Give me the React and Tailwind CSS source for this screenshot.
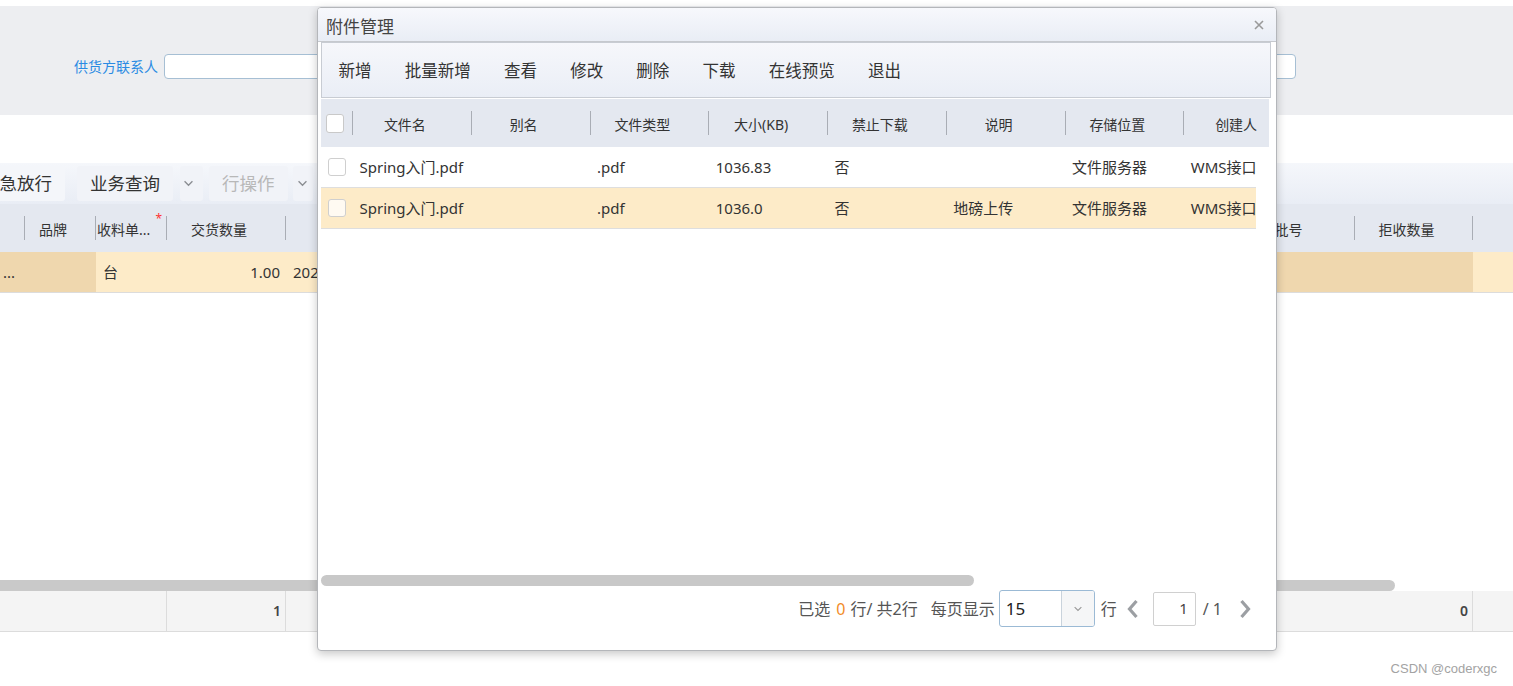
import React from 'react';

// Tiny drawn glyphs used by the toolbars and the pager
const ChevronDown = ({ className }) => (
    <svg viewBox="0 0 12 8" className={className} fill="none" stroke="currentColor" strokeWidth="1.5">
        <polyline points="1.5,1.5 6,6 10.5,1.5" />
    </svg>
);

const ChevronSide = ({ dir, className }) => (
    <svg viewBox="0 0 14 20" className={className} fill="none" stroke="currentColor" strokeWidth="3.2" strokeLinejoin="miter">
        {dir === 'left' ? <polyline points="11,2 4,10 11,18" /> : <polyline points="3,2 10,10 3,18" />}
    </svg>
);

const CloseIcon = () => (
    <svg viewBox="0 0 10 10" className="w-[10px] h-[10px] text-[#9a9a9a]" fill="none" stroke="currentColor" strokeWidth="1.6">
        <path d="M1 1 L9 9 M9 1 L1 9" />
    </svg>
);

const Divider = () => <div className="w-px h-[24px] bg-[#a9adb5] shrink-0" />;

// background grid columns (page behind the dialog, scrolled horizontally)
const bgCols = [
    { w: 'w-[25px]', head: '', foot: '' },
    { w: 'w-[71px]', head: '品牌', foot: '' },
    { w: 'w-[71px]', head: '收料单...', cell: '台', req: true, foot: '' },
    { w: 'w-[119px]', head: '交货数量', cell: '1.00', right: true, foot: '1' },
    { w: 'w-[951px]', head: '', cell: '2022-01-01', foot: '' },
    { w: 'w-[118px]', head: '批号', cell: '', dark: true, foot: '' },
    { w: 'w-[118px]', head: '拒收数量', cell: '', dark: true, foot: '0' },
];

const dialogCols = [
    { title: '文件名', key: 'name' },
    { title: '别名', key: 'alias' },
    { title: '文件类型', key: 'type' },
    { title: '大小(KB)', key: 'size' },
    { title: '禁止下载', key: 'noDl' },
    { title: '说明', key: 'desc' },
    { title: '存储位置', key: 'store' },
    { title: '创建人', key: 'creator' },
];

const files = [
    { id: 1, name: 'Spring入门.pdf', alias: '', type: '.pdf', size: '1036.83', noDl: '否', desc: '', store: '文件服务器', creator: 'WMS接口', selected: false },
    { id: 2, name: 'Spring入门.pdf', alias: '', type: '.pdf', size: '1036.0', noDl: '否', desc: '地磅上传', store: '文件服务器', creator: 'WMS接口', selected: true },
];

const toolButtons = ['新增', '批量新增', '查看', '修改', '删除', '下载', '在线预览', '退出'];

const AttachmentDialog = () => (
    <div className="absolute left-[317px] top-[7px] w-[960px] h-[644px] bg-white border border-[#b4b6ba] rounded-[4px] shadow-[0_3px_10px_rgba(0,0,0,0.22)] flex flex-col overflow-hidden">
        {/* Title bar */}
        <div className="h-[34px] shrink-0 flex items-center justify-between border-b border-[#c6c9ce] bg-gradient-to-b from-[#f7f8fc] to-[#e9edf5] pl-[8px] pr-[12px]">
            <span className="mt-[3px] text-[17px] leading-none text-[#444]">附件管理</span>
            <CloseIcon />
        </div>

        <div className="flex-1 flex flex-col pl-[3px] pr-[5px]">
            {/* Toolbar */}
            <div className="h-[56px] shrink-0 flex items-center border border-[#c8ccd3] bg-gradient-to-b from-[#f6f7fb] to-[#eaeef6]">
                {toolButtons.map((b) => (
                    <span key={b} className="mt-[2px] px-[16.6px] text-[16.5px] leading-none text-[#333]">{b}</span>
                ))}
            </div>

            {/* Grid header */}
            <div className="mt-px h-[48px] w-[948px] shrink-0 overflow-hidden bg-[#e4e8f0]">
                <div className="flex items-center h-full w-max">
                    <div className="w-[32px] flex items-center">
                        <div className="ml-[5px] w-[18px] h-[19px] rounded-[3px] border border-[#c9c9c9] bg-white" />
                        <div className="flex-1" />
                        <Divider />
                    </div>
                    {dialogCols.map((c) => (
                        <div key={c.key} className="w-[118.75px] flex items-center">
                            <span className="mt-[3px] flex-1 pr-[14px] text-center text-[14px] leading-none text-[#333]">{c.title}</span>
                            <Divider />
                        </div>
                    ))}
                </div>
            </div>

            {/* Grid body */}
            <div className="h-[428px] w-[935px] shrink-0 overflow-hidden">
                {files.map((f) => (
                    <div key={f.id} className={`h-[41px] w-max flex items-center border-b border-[#dedede] ${f.selected ? 'bg-[#fdebc8]' : 'bg-white'}`}>
                        <div className="w-[32px] flex items-center">
                            <div className={`ml-[7px] w-[18px] h-[18px] rounded-[3px] border border-[#cfcfcf] ${f.selected ? 'bg-[#fffaf2]' : 'bg-white'}`} />
                        </div>
                        {dialogCols.map((c) => (
                            <div key={c.key} className="w-[118.75px] pl-[6.5px] whitespace-nowrap overflow-hidden text-[15px] leading-[22px] text-[#333]">
                                {f[c.key]}
                            </div>
                        ))}
                    </div>
                ))}
            </div>

            {/* Horizontal scrollbar */}
            <div className="h-[11px] w-[653px] shrink-0 rounded-full bg-[#c8c8c8]" />

            {/* Pager */}
            <div className="mt-[4px] h-[37px] flex items-center justify-end pr-[18px] text-[16px] leading-none text-[#555]">
                <span>已选</span>
                <span className="ml-[6px] text-[#f28c28]">0</span>
                <span className="ml-[5px]">行/ 共2行</span>
                <span className="ml-[13px]">每页显示</span>
                <div className="ml-[4px] w-[96px] h-[37px] flex rounded-[3px] border border-[#9bbad5] bg-white overflow-hidden">
                    <span className="flex-1 flex items-center pl-[6px] text-[17px] text-[#222]">15</span>
                    <div className="w-[33px] flex items-center justify-center border-l border-[#c9d3dc] bg-[#f5f6f7]">
                        <ChevronDown className="w-[10px] h-[6px] text-[#999]" />
                    </div>
                </div>
                <span className="ml-[6px]">行</span>
                <ChevronSide dir="left" className="ml-[8px] w-[15px] h-[20px] text-[#9c9fa3]" />
                <div className="ml-[13px] w-[43px] h-[34px] flex items-center justify-end pr-[7px] rounded-[2px] border border-[#d0d0d0] text-[15px] text-[#444]">1</div>
                <span className="ml-[7px]">/ 1</span>
                <ChevronSide dir="right" className="ml-[16px] w-[15px] h-[20px] text-[#9c9fa3]" />
            </div>
        </div>
    </div>
);

export default function App() {
    return (
        <div className="relative w-[1513px] h-[686px] overflow-hidden bg-white font-['Noto_Sans','Noto_Sans_CJK_SC',sans-serif]">
            <div className="h-[6px]" />

            {/* Query form */}
            <div className="h-[109px] bg-[#edeef1]">
                <div className="pt-[48px] flex items-center">
                    <span className="w-[158px] text-right text-[14px] leading-none text-[#2b8be3]">供货方联系人</span>
                    <div className="ml-[6px] w-[1132px] h-[25px] rounded-[4px] border border-[#a6bfd4] bg-white" />
                </div>
            </div>

            <div className="h-[48px]" />

            {/* Page toolbar */}
            <div className="h-[41px] flex items-center bg-gradient-to-b from-[#f5f7fb] to-[#e9edf5] text-[17.5px] leading-none">
                <div className="-ml-[31px] h-[35px] flex items-center px-[13px] rounded-[3px] bg-[#f4f6fa] text-[#333]">紧急放行</div>
                <div className="ml-[12px] h-[35px] flex items-center px-[13px] rounded-[3px] bg-[#f1f3f8] text-[#333]">业务查询</div>
                <div className="ml-[7px] w-[23px] h-[35px] flex items-center pl-[3px] rounded-[3px] bg-[#f1f3f8]">
                    <ChevronDown className="w-[11px] h-[7px] text-[#8a8d92]" />
                </div>
                <div className="ml-[6px] h-[35px] flex items-center px-[13px] rounded-[3px] bg-[#f1f3f8] text-[#b8b8b8]">行操作</div>
                <div className="ml-[5px] w-[20px] h-[35px] flex items-center justify-center rounded-[3px] bg-[#f1f3f8]">
                    <ChevronDown className="w-[11px] h-[7px] text-[#8a8d92]" />
                </div>
            </div>

            {/* Page grid header */}
            <div className="h-[48px] flex items-center bg-[#e4e8f0]">
                {bgCols.map((c, i) => (
                    <div key={i} className={`${c.w} shrink-0 flex items-center`}>
                        {c.req ? (
                            <span className="mt-[3px] flex-1 pl-px text-[14px] leading-none text-[#333] relative">
                                {c.head}
                                <span className="absolute -top-[10px] right-[4px] text-[12px] text-[#f33]">*</span>
                            </span>
                        ) : (
                            <span className="mt-[3px] flex-1 pr-[14px] text-center text-[14px] leading-none text-[#333]">{c.head}</span>
                        )}
                        {i !== 4 && <Divider />}
                    </div>
                ))}
            </div>

            {/* Page grid selected row */}
            <div className="h-[41px] flex border-b border-[#dcdcdc] bg-[#fdebc8] text-[15px] leading-[22px] text-[#333]">
                <div className="w-[96px] shrink-0 flex items-center pl-[3px] bg-[#efd7ae]">...</div>
                {bgCols.slice(2).map((c, i) => (
                    <div key={i} className={`${c.w} shrink-0 flex items-center whitespace-nowrap overflow-hidden ${c.dark ? 'bg-[#efd7ae]' : ''} ${c.right ? 'justify-end pr-[6px]' : 'pl-[7px]'}`}>
                        {c.cell}
                    </div>
                ))}
            </div>

            <div className="h-[287px]" />

            {/* Page horizontal scrollbar */}
            <div className="h-[11px] w-[1395px] rounded-r-full bg-[#c9c9c9]" />

            {/* Page grid summary row */}
            <div className="h-[41px] flex border-b border-[#dcdcdc] bg-[#f4f4f4] text-[14px] font-semibold leading-none text-[#444]">
                {bgCols.map((c, i) => (
                    <div key={i} className={`${c.w} shrink-0 flex items-center justify-end pr-[4px] ${i >= 2 && i !== 5 ? 'border-r border-[#dcdcdc]' : ''}`}>
                        {c.foot}
                    </div>
                ))}
            </div>

            <AttachmentDialog />

            <span className="absolute right-[16px] bottom-[11px] text-[13px] leading-none text-[#a3a3a3] font-['Liberation_Sans',sans-serif]">CSDN @coderxgc</span>
        </div>
    );
}
